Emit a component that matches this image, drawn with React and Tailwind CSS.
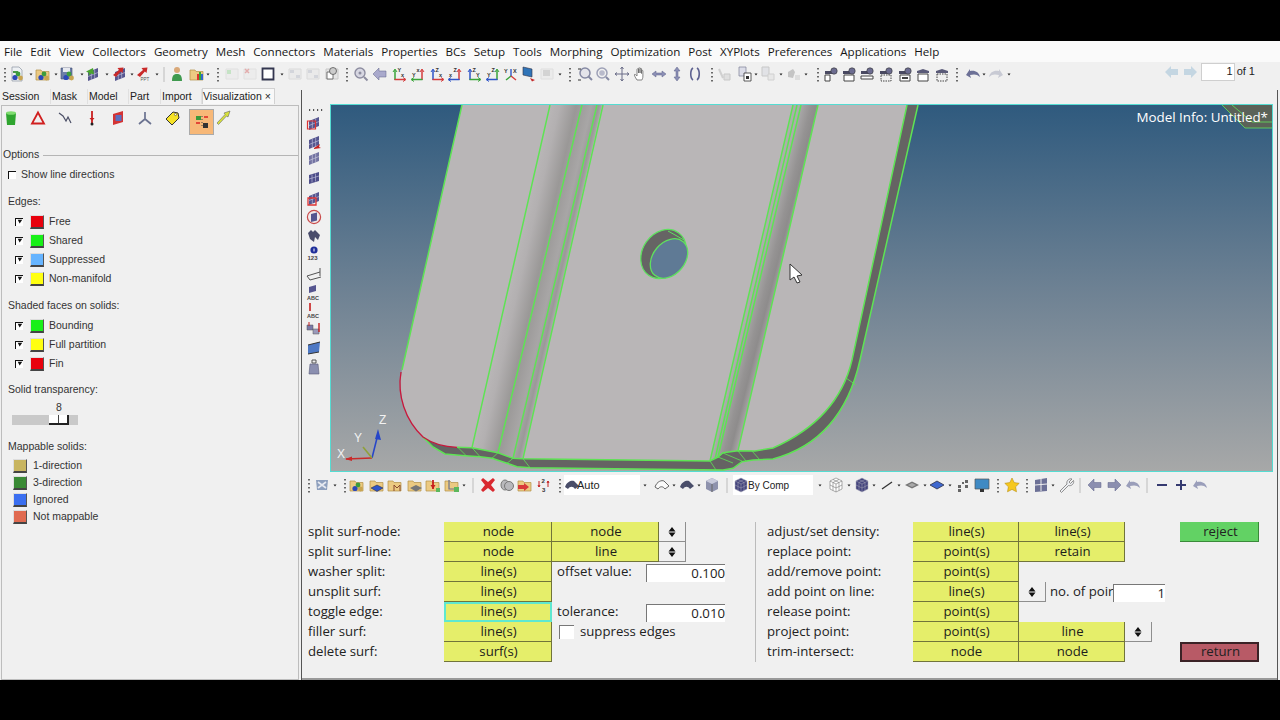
const MENU = ['File', 'Edit', 'View', 'Collectors', 'Geometry', 'Mesh', 'Connectors', 'Materials', 'Properties', 'BCs', 'Setup', 'Tools', 'Morphing', 'Optimization', 'Post', 'XYPlots', 'Preferences', 'Applications', 'Help'];

// small building blocks for the toolbar drawings
const grid = (
  <g>
    <path d="M3 6l10-4v9L3 15z" fill="#55558f" />
    <path d="M6.300 5v9M9.700 3.500v9M3 10.500l10-4" stroke="#c9c9e0" strokeWidth=".6" fill="none" />
  </g>
);
const folder = <path d="M1 4h5l1 1.5h7V14H1z" fill="#ecca82" stroke="#b28f45" strokeWidth=".7" />;
const blobs = (
  <g>
    <circle cx="6" cy="11.5" r="2.6" fill="#2c49b8" />
    <circle cx="11.5" cy="12" r="2.4" fill="#c9a550" />
    <circle cx="9" cy="8" r="2.4" fill="#3d9c3d" />
  </g>
);
const page = <path d="M3 1h7l3 3v11H3z" fill="#eef1f4" stroke="#8b93a0" strokeWidth=".7" />;
const tile = <path d="M2 3h12v10H2z" fill="#e5e5e5" stroke="#c8c8c8" />;
const lbl = (x, y, t, c = '#333') => <text x={x} y={y} fontSize="5.5" fontWeight="700" fill={c} fontFamily="Liberation Sans">{t}</text>;
const axes = (a, b, ta, tb) => (
  <g strokeWidth="1.5" fill="none">
    <path d="M4 14V4" stroke={a} />
    <path d="M2 6l2-3 2 3" stroke={a} strokeWidth="1" />
    <path d="M3.5 13.5H14" stroke={b} />
    <path d="M12 11.5l3 2-3 2" stroke={b} strokeWidth="1" />
    {lbl(6.5, 6, ta)}
    {lbl(10, 11, tb)}
  </g>
);
const axesFlip = (a, b, ta, tb) => (
  <g strokeWidth="1.5" fill="none">
    <path d="M12 14V4" stroke={a} />
    <path d="M10 6l2-3 2 3" stroke={a} strokeWidth="1" />
    <path d="M12.5 13.5H2" stroke={b} />
    <path d="M4 11.5l-3 2 3 2" stroke={b} strokeWidth="1" />
    {lbl(6.5, 6, ta)}
    {lbl(2, 11, tb)}
  </g>
);
const camera = (under) => (
  <g>
    <path d="M2 5h9v3H2z" fill="#4a4a62" />
    <circle cx="11" cy="5" r="3.2" fill="#6c6c90" stroke="#333" strokeWidth=".6" />
    {under}
  </g>
);
const fat = (d, c = '#8b8fb5') => <path d={d} fill={c} stroke="#5f6389" strokeWidth=".5" />;

const G = {
  dots: <path d="M8 2v1.4M8 6v1.4M8 10v1.4M8 14v1.4" stroke="#222" strokeWidth="1.3" />,
  hdots: <path d="M3 8h1.200M7 8h1.200M11 8h1.200M15 8h1.200" stroke="#222" strokeWidth="1.300" />,
  drop: <path d="M6.5 7.5h3L8 9.5z" fill="#222" />,
  sep: <path d="M8 1v15" stroke="#bcbcbc" />,
  imp: <g>{page}<path d="M4 6h5" stroke="#4a9a4a" strokeWidth="2" />{blobs}</g>,
  folderBlobs: <g>{folder}{blobs}</g>,
  save: <g><path d="M1 2h11v11H1z" fill="#6d7fa8" stroke="#3f4c70" strokeWidth=".6" /><path d="M3 2h7v4H3z" fill="#e7e9ef" />{blobs}</g>,
  arrowIn: <g>{grid}<path d="M8 2L1 5.5l3 1.5-.5 3L6 7.5l3 1z" fill="#4aa32f" /></g>,
  arrowOut: <g>{grid}<path d="M1 9l6-5-1.5-2 6-.5-1 5.5-1.6-1.5L4 11z" fill="#c92a2a" /></g>,
  ppt: <g><path d="M1 9l6-5-1.5-2 6-.5-1 5.5-1.6-1.5L4 11z" fill="#c92a2a" /><text x="4.5" y="15" fontSize="4.5" fill="#555" fontFamily="Liberation Sans">PPT</text></g>,
  person: <g><circle cx="8" cy="4" r="3" fill="#d9a878" /><path d="M3 15c0-6 2-7 5-7s5 1 5 7z" fill="#3f9a4f" /></g>,
  folderColor: <g>{folder}<path d="M8 8h2v6H8z" fill="#d33" /><path d="M10 6h2v8h-2z" fill="#3a3" /><path d="M12 8h2v6h-2z" fill="#36c" /></g>,
  fadeAdd: <g opacity=".35">{tile}<path d="M3 4h4v4H3z" fill="#7c7" /></g>,
  fadeDel: <g opacity=".35">{tile}<path d="M3 3l4 4m0-4L3 7" stroke="#c33" strokeWidth="1.5" /></g>,
  box: <path d="M2.5 2.5h11v11h-11z" fill="#fff" stroke="#33364f" strokeWidth="1.8" />,
  fadeTile: <g opacity=".5">{tile}<path d="M3 4h4v3H3zM9 9h4v3H9z" fill="#b8bcc8" /></g>,
  help: <g>{tile}<path d="M3 13V6h6v7z" fill="#fff" stroke="#555" strokeWidth=".8" /><circle cx="9" cy="5" r="3.5" fill="#ccc" stroke="#555" strokeWidth=".8" /></g>,
  mag: <g><circle cx="7" cy="7" r="5" fill="#d7d7e2" stroke="#8d8da0" strokeWidth="1.4" /><path d="M11 11l3.5 3.5" stroke="#8d8da0" strokeWidth="2" /><circle cx="7" cy="7" r="1.5" fill="#8d8da0" /></g>,
  back: fat('M1 8l6-6v3h7v6H7v3z', '#a9a9cc'),
  backPale: <path d="M1 8l6-6v3h7v6H7v3z" fill="#c4d6e2" />,
  nextPale: <path d="M15 8L9 2v3H2v6h7v3z" fill="#c4d6e2" />,
  back2: fat('M1 8l6-6v3.500h7v5H7V14z', '#8c8fb0'),
  next2: fat('M15 8L9 2v3.500H2v5h7V14z', '#8c8fb0'),
  yx: axes('#3aa53a', '#d43c3c', 'Y', 'x'),
  xy: axesFlip('#d43c3c', '#3aa53a', 'x', 'Y'),
  zx: axes('#2f55c8', '#d43c3c', 'Z', 'x'),
  xz: axesFlip('#d43c3c', '#2f55c8', 'Z', 'x'),
  zy: axes('#2f55c8', '#3aa53a', 'Z', 'Y'),
  yz: axesFlip('#3aa53a', '#2f55c8', 'Z', 'Y'),
  triadView: <g strokeWidth="1.4"><path d="M8 3v7" stroke="#2f55c8" /><path d="M8 10l-5 4" stroke="#3aa53a" /><path d="M8 10l5 4" stroke="#d43c3c" />{lbl(1, 7, 'Y')}{lbl(10, 7, 'X')}</g>,
  monitor: <g><path d="M2 1l9 2v8l-9-2z" fill="#2f74b8" stroke="#334" strokeWidth=".6" /><path d="M9 12l5 2-3 1.5z" fill="#c42a2a" /></g>,
  fadeMesh: <g opacity=".4">{tile}<path d="M4 4h7v6H4z" fill="#aaa" /></g>,
  fitZoom: <g><circle cx="8" cy="7" r="5" fill="#e4e4ea" stroke="#8589a3" strokeWidth="1.5" /><path d="M11.5 10.5L15 14" stroke="#8589a3" strokeWidth="2" /><path d="M1 14h3M1 3h3" stroke="#333" /></g>,
  circleZoom: <g><circle cx="7" cy="7" r="5" fill="none" stroke="#9da0b6" strokeWidth="1.5" /><circle cx="7" cy="7" r="2.8" fill="#b8bacb" /><path d="M11 11l3 3" stroke="#8589a3" strokeWidth="2" /></g>,
  pan: <path d="M8 1v14M1 8h14M6.5 3L8 1l1.5 2M6.5 13L8 15l1.5-2M3 6.5L1 8l2 1.5M13 6.5L15 8l-2 1.5" stroke="#6a6d88" fill="none" />,
  hand: <path d="M5 14C3 11 2 9 2.5 8.5S4 9 5 10V3.5c0-1 1.5-1 1.5 0V7V2.5c0-1 1.5-1 1.5 0V7V3c0-1 1.5-1 1.5 0v4.5V5c0-1 1.4-1 1.4 0v5c0 2-.5 3-1 4z" fill="#fff" stroke="#666" strokeWidth=".8" />,
  lr: fat('M1 8l4-3v2h6V5l4 3-4 3V9H5v2z'),
  ud: fat('M8 1l3 4H9v6h2l-3 4-3-4h2V5H5z'),
  braces: <g fill="none" stroke="#5d6190" strokeWidth="1.6"><path d="M6 2C3 4 3 12 6 14" /><path d="M10 2c3 2 3 10 0 12" /></g>,
  fadeA: <g opacity=".45"><path d="M3 3l4 9" stroke="#aaa" strokeWidth="2" /><path d="M8 8h6v6H8z" fill="#ccc" stroke="#999" /></g>,
  pages: <g><path d="M2 1h7v9H2z" fill="#dcdde8" stroke="#7b7e95" strokeWidth=".7" /><path d="M7 7h7v8H7z" fill="#fff" stroke="#333" strokeWidth=".8" /><path d="M9 10h3v3H9z" fill="#333" /></g>,
  fadeB: <g opacity=".45"><path d="M2 1h7v9H2z" fill="#cfd2da" stroke="#999" /><path d="M8 8h6v6H8z" fill="#ddd" stroke="#aaa" /></g>,
  fadeC: <g opacity=".5"><path d="M3 6l5-3 2 3-2 6-5-1z" fill="#999" /><path d="M10 9h5v5h-5z" fill="#ccc" /></g>,
  cam1: camera(<path d="M2 9h5v6H2z" fill="#fff" stroke="#444" />),
  cam2: camera(<path d="M3 9h10v6H3z" fill="#fff" stroke="#444" />),
  cam3: camera(<path d="M2 10h12v3H2z" fill="#fff" stroke="#444" />),
  cam4: camera(<path d="M3 9h10v6H3z" fill="none" stroke="#444" strokeDasharray="1.5 1" />),
  cam5: camera(<g><path d="M3 9h10v6H3z" fill="#fff" stroke="#444" /><path d="M5 11h6v2H5z" fill="#444" /></g>),
  vid1: <g><path d="M2 5l6-2 6 2v2H2z" fill="#5a5a78" /><path d="M3 8h10v7H3z" fill="#fff" stroke="#444" /></g>,
  vid2: <g><path d="M2 5l6-2 6 2v2H2z" fill="#5a5a78" /><path d="M3 8h10v7H3z" fill="none" stroke="#444" strokeDasharray="1.5 1" /></g>,
  undo: <path d="M1 9l4-6v2c5-1 9 1 10 6-3-3-6-3-10-2l1 3z" fill="#6c7096" />,
  redo: <path d="M15 9l-4-6v2C6 4 2 6 1 11c3-3 6-3 10-2l-1 3z" fill="#c8cad4" />,
  undoFade: <path d="M1 9l4-6v2c5-1 9 1 10 6-3-3-6-3-10-2l1 3z" fill="#9a9eba" />,
  // left panel row
  bucket: <g><path d="M3 3h10l-1 12H4z" fill="#2fa52f" /><ellipse cx="8" cy="3" rx="5" ry="1.8" fill="#7fdc6f" /></g>,
  tri: <path d="M8 2.5l6 11H2z" fill="none" stroke="#d01f1f" strokeWidth="1.8" />,
  lineNode: <path d="M2 3l4 3 3 5 2-4 3 6" fill="none" stroke="#4b4f66" strokeWidth="1.2" />,
  pin: <g><path d="M8 1v12" stroke="#c81e1e" strokeWidth="1.8" /><path d="M5.5 8L8 11l2.5-3z" fill="#c81e1e" /><circle cx="8" cy="14" r="1.5" fill="#222" /></g>,
  redMesh: <g><path d="M3 4l10-3v11L3 15z" fill="#d43434" /><path d="M5.5 5h6v6h-6z" fill="#5b6fc0" /></g>,
  triad: <path d="M8 2v7M8 9l-6 5M8 9l6 5" fill="none" stroke="#6a7290" strokeWidth="1.7" />,
  tag: <g><path d="M2 9l7-7 5 1 1 5-7 7z" fill="#f6e227" stroke="#333" strokeWidth="1" /><circle cx="11.5" cy="4.5" r="1.1" fill="#fff" stroke="#333" strokeWidth=".5" /></g>,
  split: <g><path d="M2 2h5v4H2z" fill="#3a9a3a" /><path d="M9 9h5v5H9z" fill="#333" /><path d="M2 9h4M10 3h4" stroke="#d22" strokeWidth="1.5" /><path d="M8 2v12" stroke="#444" strokeDasharray="1 2" /></g>,
  yellowArrow: <g><path d="M15 1L9 3l1 1.5L2 13l1.5 1.5L11.5 6l1.5 1z" fill="#d8e23a" stroke="#666" strokeWidth=".6" /></g>,
  // vertical bar
  v1: <g>{grid}<path d="M1.500 6h8v8h-8z" fill="none" stroke="#d33" strokeWidth="1.2" /></g>,
  v2: <g>{grid}<path d="M8 14l6-4-1 3 2 1-7 1z" fill="#c42020" /></g>,
  v3: <g opacity=".8">{grid}</g>,
  v4: <g><path d="M3 5l10-3v9L3 14z" fill="#4e4e8a" /><path d="M6 4.5v8M9.5 3.5v8M3 9l10-3" stroke="#c9c9e0" strokeWidth=".6" /></g>,
  v5: <g>{grid}<path d="M2 8h8v7H2z" fill="none" stroke="#d33" strokeWidth="1.3" /></g>,
  v6: <g><circle cx="8" cy="8" r="6.6" fill="#f0e8e8" stroke="#c94b4b" strokeWidth="1.2" /><path d="M5 5l6-1.5v8L5 13z" fill="#55558f" /></g>,
  binoc: <path d="M2 6l3-3 2 2 2-2 2 2 3 3-2 5-3-3-1 5-4-3z" fill="#4a4d6c" />,
  info: <g><circle cx="8" cy="5" r="3.6" fill="#1f2f9a" /><path d="M8 3.5v3" stroke="#fff" /><text x="1.5" y="15" fontSize="6" fontWeight="700" fill="#444" fontFamily="Liberation Sans">123</text></g>,
  measure: <g fill="none" stroke="#555"><path d="M1 9l13-4M1 9l3 4 11-3" /><path d="M14 1v8" /></g>,
  abc: <g><path d="M3 3l7-2v6l-7 2z" fill="#55558f" /><text x="1" y="15.500" fontSize="5.500" fontWeight="700" fill="#444" fontFamily="Liberation Sans">ABC</text></g>,
  abcPin: <g><path d="M4 1v8" stroke="#c81e1e" strokeWidth="1.6" /><text x="1" y="15.5" fontSize="5.5" fontWeight="700" fill="#444" fontFamily="Liberation Sans">ABC</text></g>,
  transl: <g><path d="M1 5h6v5H1z" fill="#7a7aa8" stroke="#555" strokeWidth=".5" /><path d="M7 9h6v5H7z" fill="#9a9aba" stroke="#555" strokeWidth=".5" /><path d="M13 3v9" stroke="#c42020" strokeWidth="1.4" /><path d="M3 2v4" stroke="#c42020" /></g>,
  plane: <g><path d="M2 5l12-3-1 10-11 2z" fill="#4d78c4" /><path d="M2 5l12-3M2 14l11-2" stroke="#333" /></g>,
  weight: <g><path d="M6 1h4v3H6z" fill="none" stroke="#555" /><path d="M4 5h8l1 10H3z" fill="#8b8fb0" stroke="#5a5d7a" strokeWidth=".6" /></g>,
  // bottom bar
  gearMesh: <g><path d="M2 3l12 0-1 10H3z" fill="#8d9fbd" /><path d="M4 5l8 6M12 5l-8 6" stroke="#e6e9f0" strokeWidth="1.6" /></g>,
  folderDiamond: <g>{folder}<path d="M2 11l6-3 6 3-6 3.5z" fill="#2f55c8" stroke="#223" strokeWidth=".5" /></g>,
  folderPlot: <g>{folder}<path d="M7 14V8l3 3 3-3v6" stroke="#8a4a30" fill="none" /></g>,
  folderGray: <g>{folder}<path d="M3 11l6-3 6 3-6 3.5z" fill="#777" /></g>,
  folderPin: <g>{folder}<path d="M8 3v9" stroke="#c81e1e" strokeWidth="1.8" /><path d="M5.5 8L8 12l2.5-4z" fill="#c81e1e" /><path d="M11 11h4v4h-4z" fill="#5cb85c" /></g>,
  folderAxis: <g>{folder}<path d="M5 3v9h7" stroke="#6a7290" fill="none" strokeWidth="1.2" /><path d="M10 10h5v5h-5z" fill="#5cb85c" /></g>,
  redX: <path d="M3 1l5 4 5-4 2 2-4 5 4 5-2 2-5-4-5 4-2-2 4-5-4-5z" fill="#d9282f" />,
  parts: <g fill="#b8b8bc" stroke="#777"><ellipse cx="6" cy="8" rx="4" ry="5" /><ellipse cx="10" cy="9" rx="4.5" ry="4.5" /></g>,
  folderRed: <g>{folder}<path d="M1 8h6v-2l5 4-5 4v-2H1z" fill="#d93a3a" /></g>,
  nums: <g><text x="5.5" y="6" fontSize="6" fontWeight="700" fill="#333" fontFamily="Liberation Sans">2</text><text x="6" y="15" fontSize="6" fontWeight="700" fill="#333" fontFamily="Liberation Sans">3</text><path d="M3 4v6M2 8l1 2 1-2M12 4v6M11 6l1-2 1 2" stroke="#c42020" fill="none" /></g>,
  surfLine: <path d="M1 10C3 4 8 3 10 4l5 5-4 3c-2-3-5-3-7 0z" fill="#fafafa" stroke="#666" />,
  surfDark: <path d="M1 10C3 4 8 3 10 4l5 5-4 3c-2-3-5-3-7 0z" fill="#4a4e6a" />,
  cube: <g><path d="M8 1l6 3v8l-6 3-6-3V4z" fill="#8e92ad" /><path d="M8 1l6 3-6 3-6-3z" fill="#c9cbdc" /><path d="M8 7v8" stroke="#666" /></g>,
  cubeWire: <g fill="#fff" stroke="#777" strokeWidth=".6"><path d="M8 1l6 3v8l-6 3-6-3V4z" /><path d="M2 4l6 3 6-3M8 7v8M5 2.5l6 3v8M11 2.5l-6 3v8M2 8l6 3 6-3" fill="none" /></g>,
  cubeMesh: <g stroke="#aab" strokeWidth=".5"><path d="M8 1l6 3v8l-6 3-6-3V4z" fill="#44447e" /><path d="M2 4l6 3 6-3M8 7v8M5 2.5l6 3v8M11 2.5l-6 3v8M2 8l6 3 6-3" fill="none" /></g>,
  lineDash: <path d="M3 12L13 5" stroke="#333" strokeWidth="1.3" />,
  flat: <g><path d="M1 8l7-3.5L15 8l-7 3.5z" fill="#777" /><path d="M4 8l4-2 4 2-4 2z" fill="#aaa" /></g>,
  flatBlue: <path d="M1 8l7-4 7 4-7 4z" fill="#3f68cf" stroke="#223" strokeWidth=".7" />,
  squares: <path d="M3 8h3v3H3zM10 3h3v3h-3zM3 12h3v3H3zM10 8h3v3h-3zM7 5h2v2H7z" fill="#666" />,
  screen: <g><path d="M1 2h14v10H1z" fill="#3f8ac4" stroke="#555" strokeWidth=".7" /><path d="M6 12h4v3H6z" fill="#333" /></g>,
  star: <path d="M8 1l2.2 4.6 5 .7-3.6 3.5.9 5L8 12.4l-4.5 2.4.9-5L.8 6.3l5-.7z" fill="#f6c81e" stroke="#b98f14" strokeWidth=".6" />,
  panes: <g><path d="M2 3l12-2v13L2 15z" fill="#6c7096" /><path d="M8 2v12M2 8l12-1" stroke="#eee" /></g>,
  wrench: <path d="M2 14l7-7c-1-3 2-6 5-5l-3 3 1.500 1.500 3-3c1 3-2 6-5 5l-7 7z" fill="#eceef2" stroke="#777" strokeWidth=".8" />,
  minus: <path d="M3 8h10" stroke="#353a70" strokeWidth="2" />,
  plus: <path d="M3 8h10M8 3v10" stroke="#353a70" strokeWidth="2" />,
};

const Ico = ({ n }) => (
  <svg viewBox="0 0 16 16" className="h-4 w-4 shrink-0 overflow-visible">{G[n]}</svg>
);

const Cells = ({ items }) => items.map(([n, w], i) => (
  <div key={i} className={w + ' shrink-0'}><Ico n={n} /></div>
));

const TOP = [
  ['dots', 'w-[12px]'], ['imp', 'w-[14px]'], ['drop', 'w-[12px]'], ['folderBlobs', 'w-[13px]'], ['drop', 'w-[12px]'], ['save', 'w-[14px]'], ['drop', 'w-[11px]'],
  ['arrowIn', 'w-[14px]'], ['drop', 'w-[13px]'], ['arrowOut', 'w-[12px]'], ['drop', 'w-[12px]'], ['ppt', 'w-[13px]'], ['drop', 'w-[7px]'], ['sep', 'w-[13px]'],
  ['person', 'w-[20px]'], ['folderColor', 'w-[11px]'], ['drop', 'w-[10px]'], ['dots', 'w-[14px]'], ['fadeAdd', 'w-[18px]'], ['fadeDel', 'w-[18px]'], ['box', 'w-[14px]'], ['drop', 'w-[13px]'],
  ['fadeTile', 'w-[18px]'], ['fadeTile', 'w-[19px]'], ['help', 'w-[15px]'], ['dots', 'w-[14px]'], ['mag', 'w-[19px]'], ['back', 'w-[19px]'],
  ['yx', 'w-[19px]'], ['xy', 'w-[19px]'], ['zx', 'w-[18px]'], ['xz', 'w-[19px]'], ['zy', 'w-[19px]'], ['yz', 'w-[18px]'], ['triadView', 'w-[18px]'], ['monitor', 'w-[18px]'],
  ['fadeMesh', 'w-[13px]'], ['drop', 'w-[10px]'], ['dots', 'w-[15px]'], ['fitZoom', 'w-[18px]'], ['circleZoom', 'w-[19px]'], ['pan', 'w-[18px]'], ['hand', 'w-[19px]'], ['lr', 'w-[18px]'], ['ud', 'w-[18px]'], ['braces', 'w-[17px]'],
  ['dots', 'w-[12px]'], ['fadeA', 'w-[21px]'], ['pages', 'w-[11px]'], ['drop', 'w-[12px]'], ['fadeB', 'w-[13px]'], ['drop', 'w-[12px]'], ['fadeC', 'w-[13px]'], ['drop', 'w-[12px]'], ['dots', 'w-[13px]'],
  ['cam1', 'w-[18px]'], ['cam2', 'w-[18px]'], ['cam3', 'w-[19px]'], ['cam4', 'w-[19px]'], ['cam5', 'w-[18px]'], ['vid1', 'w-[19px]'], ['vid2', 'w-[15px]'], ['dots', 'w-[16px]'],
  ['undo', 'w-[11px]'], ['drop', 'w-[12px]'], ['redo', 'w-[13px]'], ['drop', 'w-[12px]'],
];

const VERT = [
  ['hdots', 'h-[13px]'], ['v1', 'h-[19px]'], ['v2', 'h-[16px]'], ['v3', 'h-[20px]'], ['v4', 'h-[20px]'], ['v5', 'h-[19px]'], ['v6', 'h-[18px]'], ['binoc', 'h-[18px]'],
  ['info', 'h-[22px]'], ['measure', 'h-[17px]'], ['abc', 'h-[18px]'], ['abcPin', 'h-[18px]'], ['transl', 'h-[20px]'], ['plane', 'h-[19px]'], ['weight', 'h-[16px]'],
];

const BOT1 = [
  ['dots', 'w-[13px]'], ['gearMesh', 'w-[13px]'], ['drop', 'w-[10px]'], ['dots', 'w-[12px]'], ['folderBlobs', 'w-[20px]'], ['folderDiamond', 'w-[18px]'], ['folderPlot', 'w-[20px]'], ['folderGray', 'w-[18px]'],
  ['folderPin', 'w-[19px]'], ['folderAxis', 'w-[12px]'], ['drop', 'w-[9px]'], ['sep', 'w-[15px]'], ['redX', 'w-[19px]'], ['parts', 'w-[18px]'], ['folderRed', 'w-[19px]'], ['nums', 'w-[16px]'], ['dots', 'w-[12px]'],
];
const BOT2 = [
  ['drop', 'w-[17px]'], ['surfLine', 'w-[12px]'], ['drop', 'w-[13px]'], ['surfDark', 'w-[12px]'], ['drop', 'w-[13px]'], ['cube', 'w-[15px]'], ['sep', 'w-[14px]'],
];
const BOT3 = [
  ['drop', 'w-[16px]'], ['cubeWire', 'w-[13px]'], ['drop', 'w-[13px]'], ['cubeMesh', 'w-[12px]'], ['drop', 'w-[13px]'], ['lineDash', 'w-[12px]'], ['drop', 'w-[13px]'], ['flat', 'w-[13px]'], ['drop', 'w-[12px]'], ['flatBlue', 'w-[13px]'], ['drop', 'w-[13px]'],
  ['squares', 'w-[19px]'], ['screen', 'w-[16px]'], ['dots', 'w-[14px]'], ['star', 'w-[15px]'], ['dots', 'w-[14px]'], ['panes', 'w-[12px]'], ['drop', 'w-[13px]'], ['wrench', 'w-[14px]'], ['sep', 'w-[15px]'],
  ['back2', 'w-[19px]'], ['next2', 'w-[19px]'], ['undoFade', 'w-[14px]'], ['sep', 'w-[15px]'], ['minus', 'w-[19px]'], ['plus', 'w-[19px]'], ['undoFade', 'w-[16px]'],
];

const TABS = [
  ['Session', 'w-[50px]'], ['Mask', 'w-[37px]'], ['Model', 'w-[41px]'], ['Part', 'w-[32px]'], ['Import', 'w-[41px]'],
];

const Check = ({ on }) => (
  <span className="flex h-[8px] w-[8px] shrink-0 items-center justify-center border-l border-t border-[#111] bg-white">
    {on && <svg viewBox="0 0 8 8" className="h-[6px] w-[6px]"><path d="M1 1l2.500 5L7 1z" fill="#111" /></svg>}
  </span>
);

const Swatch = ({ c }) => <span className={c + ' h-[14px] w-[14px] shrink-0 border-b-2 border-r border-b-[#444] border-r-[#555] border-t border-l border-t-[#ddd] border-l-[#ddd]'} />;

const EdgeRow = ({ c, t }) => (
  <div className="flex h-[19px] items-center pl-[13px]">
    <Check on />
    <span className="ml-[7px] flex"><Swatch c={c} /></span>
    <span className="ml-[5px]">{t}</span>
  </div>
);

const MapRow = ({ c, t }) => (
  <div className="flex h-[17px] items-center pl-[11px]">
    <Swatch c={c} />
    <span className="ml-[6px]">{t}</span>
  </div>
);

const Btn = ({ w = 'w-[108px]', children, hot }) => (
  <div className={w + ' flex h-[20px] shrink-0 items-center justify-center bg-[#e5ee6a] pl-[2px] text-[#1c1c1c] border-b border-r border-b-[#71743a] border-r-[#71743a] ' + (hot ? 'outline-2 -outline-offset-2 outline-[#5fe8d0]' : '')}>{children}</div>
);

const Spin = ({ w = 'w-[27px]' }) => (
  <div className={w + ' flex h-[20px] shrink-0 items-center justify-center border-b border-r border-[#8e8e8e]'}>
    <svg viewBox="0 0 8 10" className="h-[10px] w-[8px]"><path d="M4 0l3.500 4.500h-7zM4 10l3.500-4.500h-7z" fill="#111" /></svg>
  </div>
);

const Input = ({ w, v }) => (
  <div className={w + ' mt-[2px] flex h-[18px] shrink-0 items-center justify-end bg-white border-l border-t border-[#777]'}>{v}</div>
);

const Row = ({ label, w = 'w-[136px]', children }) => (
  <div className="flex h-[20px] items-center">
    <span className={w + ' shrink-0'}>{label}</span>
    {children}
  </div>
);

const Plate = () => (
  <svg viewBox="331 105 941 366" className="h-full w-full">
    <defs>
      <linearGradient id="g1" gradientUnits="userSpaceOnUse" x1="472" y1="448" x2="525" y2="460">
        <stop offset="0" stopColor="#b9b6b7" />
        <stop offset=".18" stopColor="#b3b0b1" />
        <stop offset=".48" stopColor="#9a9897" />
        <stop offset=".75" stopColor="#a8a6a6" />
        <stop offset=".88" stopColor="#9b9999" />
        <stop offset="1" stopColor="#b9b6b7" />
      </linearGradient>
      <linearGradient id="g2" gradientUnits="userSpaceOnUse" x1="710" y1="461" x2="738" y2="468">
        <stop offset="0" stopColor="#aeacad" />
        <stop offset=".4" stopColor="#959393" />
        <stop offset=".6" stopColor="#8e8c8c" />
        <stop offset="1" stopColor="#b9b6b7" />
      </linearGradient>
    </defs>
    {/* side wall */}
    <path
      d="M423 437L433 447L445 454L465 455.700L480 456.700L492 458.300L507 463.300L517 466.700L530 467.700L723 470L733 468.300L742 461.700L753 460L773 459C825 445 850 405 860 360L918 105L907 105L852 360z"
      fill="#656363"
    />
    {/* top face */}
    <path
      d="M462 105L402 370C397 395 405 420 423 437C433 444 445 447 457 447.300L472 447.700L498 452.700L513 458.300L523 458.700L710 461L718 457L723 452.700L738 450.700L755 451L773 448C825 425 845 390 852 360L907 105z"
      fill="#b9b6b7"
    />
    <path d="M550 105L602 105L523 458.700L513 458.300L498 452.700L472 447.700z" fill="url(#g1)" />
    <path d="M793 105L818 105L738 450.700L723 452.700L718 457L710 461z" fill="url(#g2)" />
    {/* hole */}
    <ellipse cx="663.500" cy="254" rx="26" ry="21" transform="rotate(-55 663.500 254)" fill="#666464" stroke="#5fe05f" strokeWidth="1.300" />
    <ellipse cx="669" cy="258.500" rx="22" ry="16" transform="rotate(-50 669 258.500)" fill="#5f7a95" stroke="#5fe05f" strokeWidth="1.300" />
    <path d="M668 231L684 240" stroke="#5fe05f" strokeWidth="1" />
    {/* feature edges */}
    <g fill="none" stroke="#5ee354" strokeWidth="1.500">
      <path d="M462 105L402 370" />
      <path d="M907 105L852 360C845 390 825 425 773 448L755 451L738 450.700L723 452.700L718 457L710 461L523 458.700L513 458.300L498 452.700L472 447.700L457 447.300" />
      <path d="M918 105L860 360C850 405 825 445 773 459L753 460L742 461.700L733 468.300L723 470L530 467.700L517 466.700L507 463.300L492 458.300L480 456.700L465 455.700L445 454L433 447L423 437" />
      <path d="M550 105L472 447.700M582 105L498 452.700M597 105L513 458.300M603 105L523 458.700" />
      <path d="M793 105L710 461M797 105L715 459M801 105L718 457M818 105L738 450.700" />
      <path d="M458 447.500L466 455.500M472 447.700L480 456.700M498 452.700L492 458.300M513 458.300L507 463.300M523 458.700L530 467.700" strokeWidth=".8" />
      <path d="M710 461L716 470M718 457L733 463M723 453L742 461M738 451L746 461M752 451L760 460M846 378L856 385" strokeWidth=".8" />
    </g>
    <path d="M401 372C397 395 405 420 423 437C433 444 445 447 457 447.300" fill="none" stroke="#c8183c" strokeWidth="1.300" />
    {/* corner piece behind the label */}
    <path d="M1222 105L1272 105L1272 128L1245 128z" fill="#5b6258" />
    <path d="M1222 105L1245 128L1272 128M1232 105L1252 122L1272 122" fill="none" stroke="#62e35a" strokeWidth=".8" />
    {/* triad */}
    <g fill="none" strokeWidth="1.600">
      <path d="M372 458L378 434" stroke="#2746c8" />
      <path d="M372 458L346 459" stroke="#c92a2a" />
      <path d="M372 458L363 447" stroke="#8fa03a" />
    </g>
    <path d="M378 429L381 440L375 439z" fill="#2746c8" />
    <path d="M345 459L352 456.500L352 461z" fill="#c92a2a" />
    <g fontSize="12" fill="#f2f2f2" fontFamily="Liberation Sans">
      <text x="379" y="424">Z</text>
      <text x="354" y="442">Y</text>
      <text x="337" y="458">X</text>
    </g>
    {/* mouse pointer */}
    <path d="M790 264L790 280L794 277L797 283L800 282L797 276L802 275z" fill="#fff" stroke="#333" strokeWidth="1" />
  </svg>
);

export default function App() {
  return (
    <div className="flex h-[720px] w-[1280px] flex-col overflow-hidden bg-black pt-[41px] font-['Liberation_Sans',sans-serif]">
      <div className="flex h-[639px] flex-col bg-[#f0f0f0]">
        {/* menu bar */}
        <div className="flex h-[21px] items-center gap-[8px] bg-[#fafafa] pl-[4px] font-['Open_Sans',sans-serif] text-[11.6px] text-[#161616]">
          {MENU.map(m => <span key={m}>{m}</span>)}
        </div>

        {/* main toolbar */}
        <div className="flex h-[26px] items-center pb-[2px] text-[11px] text-[#222]">
          <div className="-ml-[3px] flex items-center"><Cells items={TOP} /></div>
          <div className="mb-[5px] ml-auto flex items-center pr-[25px]">
            <div className="w-[18px]"><Ico n="backPale" /></div>
            <div className="w-[19px]"><Ico n="nextPale" /></div>
            <div className="flex h-[18px] w-[34px] items-center justify-end border border-[#cfcfcf] bg-white pr-[1px]">1</div>
            <span className="ml-[2px]">of 1</span>
          </div>
        </div>

        <div className="flex min-h-0 flex-1">
          {/* left panel */}
          <div className="flex w-[301px] shrink-0 flex-col pl-[1px] pr-[2px] text-[10.5px] text-[#333]">
            <div className="flex h-[17px] items-end pb-px text-[#222]">
              {TABS.map(([t, w]) => (
                <div key={t} className={w + ' flex h-[15px] items-center border-r border-[#e0e0e0] pl-[1px]'}>{t}</div>
              ))}
              <div className="flex h-[16px] w-[73px] items-center whitespace-nowrap border border-b-0 border-[#d2d2d2] bg-[#f8f8f8]">Visualization ×</div>
            </div>
            <div className="flex-1 border border-[#bdbdbd]">
              <div className="mt-[3px] flex h-[26px] items-start pl-[1px]">
                <div className="w-[27px] pt-px"><Ico n="bucket" /></div>
                <div className="w-[27px] pt-px"><Ico n="tri" /></div>
                <div className="w-[27px] pt-px"><Ico n="lineNode" /></div>
                <div className="w-[26px] pt-px"><Ico n="pin" /></div>
                <div className="w-[27px] pt-px"><Ico n="redMesh" /></div>
                <div className="w-[27px] pt-px"><Ico n="triad" /></div>
                <div className="w-[25px] pt-px"><Ico n="tag" /></div>
                <div className="flex h-[26px] w-[25px] items-center justify-center border border-[#aaa] bg-[#f7b878]"><Ico n="split" /></div>
                <div className="ml-px pt-px"><Ico n="yellowArrow" /></div>
              </div>
              <div className="mt-[13px] flex h-[14px] items-center pl-[1px]">
                <span>Options</span>
                <div className="ml-[4px] h-px flex-1 bg-[#b5b5b5]" />
              </div>
              <div className="mt-[6px] flex h-[14px] items-center pl-[6px]">
                <Check />
                <span className="ml-[5px]">Show line directions</span>
              </div>
              <div className="mt-[12px] h-[14px] pl-[6px] leading-[14px]">Edges:</div>
              <div className="mt-[4px]">
                <EdgeRow c="bg-[#e8000c]" t="Free" />
                <EdgeRow c="bg-[#18f018]" t="Shared" />
                <EdgeRow c="bg-[#66b4ff]" t="Suppressed" />
                <EdgeRow c="bg-[#ffff10]" t="Non-manifold" />
              </div>
              <div className="mt-[10px] h-[14px] pl-[6px] leading-[14px]">Shaded faces on solids:</div>
              <div className="mt-[4px]">
                <EdgeRow c="bg-[#18f018]" t="Bounding" />
                <EdgeRow c="bg-[#ffff10]" t="Full partition" />
                <EdgeRow c="bg-[#e8000c]" t="Fin" />
              </div>
              <div className="mt-[9px] h-[14px] pl-[6px] leading-[14px]">Solid transparency:</div>
              <div className="mt-[4px] h-[14px] w-[114px] text-center leading-[14px]">8</div>
              <div className="relative ml-[10px] mt-px flex h-[10px] w-[66px] justify-start bg-[#c9c9c9]">
                <div className="ml-[37px] flex h-[10px] w-[20px] justify-center border-b-2 border-r-2 border-[#222] bg-white">
                  <div className="h-full w-px bg-[#444]" />
                </div>
              </div>
              <div className="mt-[14px] h-[14px] pl-[6px] leading-[14px]">Mappable solids:</div>
              <div className="mt-[4px]">
                <MapRow c="bg-[#c8b560]" t="1-direction" />
                <MapRow c="bg-[#3a8a35]" t="3-direction" />
                <MapRow c="bg-[#3b6ff0]" t="Ignored" />
                <MapRow c="bg-[#e06a50]" t="Not mappable" />
              </div>
            </div>
          </div>

          {/* right column */}
          <div className="mt-[2px] flex w-[977px] shrink-0 flex-col border-l border-r border-[#555]">
            <div className="h-[14px] shrink-0" />
            <div className="flex h-[368px] shrink-0">
              <div className="w-[28px] shrink-0 pl-[4px]">
                <div className="mt-[-2px]">
                  {VERT.map(([n, h], i) => <div key={i} className={h}><Ico n={n} /></div>)}
                </div>
              </div>
              <div className="relative w-[943px] shrink-0 border border-[#55dcd2] bg-[linear-gradient(180deg,#2f5a7e_0%,#6d8193_50%,#a7a8a8_100%)]">
                <Plate />
                <div className="absolute right-[4px] top-[2px] font-['Open_Sans',sans-serif] text-[13.4px] text-white">Model Info: Untitled*</div>
              </div>
            </div>

            {/* lower toolbar */}
            <div className="flex h-[26px] shrink-0 items-center text-[11px] text-[#222]">
              <div className="-ml-[1px] flex items-center"><Cells items={BOT1} /></div>
              <div className="flex h-[20px] w-[76px] shrink-0 items-center bg-white"><Ico n="surfDark" /><span className="-ml-[3px]">Auto</span></div>
              <div className="-ml-[3px] flex items-center"><Cells items={BOT2} /></div>
              <div className="flex h-[20px] w-[80px] shrink-0 items-center bg-white text-[10px]"><Ico n="cubeMesh" /><span className="-ml-px">By Comp</span></div>
              <div className="-ml-[1px] flex items-center"><Cells items={BOT3} /></div>
            </div>

            {/* edit panel */}
            <div className="flex min-h-0 flex-1 border-b-2 border-[#999] pt-[24px] font-['Open_Sans',sans-serif] text-[13.2px] text-[#222]">
              <div className="w-[453px] shrink-0 pl-[6px]">
                <Row label="split surf-node:"><Btn>node</Btn><Btn w="w-[107px]">node</Btn><Spin /></Row>
                <Row label="split surf-line:"><Btn>node</Btn><Btn w="w-[107px]">line</Btn><Spin /></Row>
                <Row label="washer split:"><Btn>line(s)</Btn><span className="ml-[5px] w-[89px] shrink-0">offset value:</span><Input w="w-[79px]" v="0.100" /></Row>
                <Row label="unsplit surf:"><Btn>line(s)</Btn></Row>
                <Row label="toggle edge:"><Btn hot>line(s)</Btn><span className="ml-[5px] w-[89px] shrink-0">tolerance:</span><Input w="w-[79px]" v="0.010" /></Row>
                <Row label="filler surf:"><Btn>line(s)</Btn><span className="ml-[7px] h-[14px] w-[15px] border-l border-t border-[#777] bg-white" /><span className="ml-[6px]">suppress edges</span></Row>
                <Row label="delete surf:"><Btn>surf(s)</Btn></Row>
              </div>
              <div className="h-[140px] w-px shrink-0 bg-[#bbb]" />
              <div className="w-[424px] shrink-0 pl-[11px]">
                <Row w="w-[146px]" label="adjust/set density:"><Btn w="w-[106px]">line(s)</Btn><Btn w="w-[106px]">line(s)</Btn></Row>
                <Row w="w-[146px]" label="replace point:"><Btn w="w-[106px]">point(s)</Btn><Btn w="w-[106px]">retain</Btn></Row>
                <Row w="w-[146px]" label="add/remove point:"><Btn w="w-[106px]">point(s)</Btn></Row>
                <Row w="w-[146px]" label="add point on line:">
                  <Btn w="w-[106px]">line(s)</Btn>
                  <Spin />
                  <span className="ml-[4px] w-[63px] shrink-0 whitespace-nowrap">no. of poir</span>
                  <Input w="w-[52px]" v="1" />
                </Row>
                <Row w="w-[146px]" label="release point:"><Btn w="w-[106px]">point(s)</Btn></Row>
                <Row w="w-[146px]" label="project point:"><Btn w="w-[106px]">point(s)</Btn><Btn w="w-[106px]">line</Btn><Spin /></Row>
                <Row w="w-[146px]" label="trim-intersect:"><Btn w="w-[106px]">node</Btn><Btn w="w-[106px]">node</Btn></Row>
              </div>
              <div className="flex h-[140px] w-[79px] shrink-0 flex-col justify-between">
                <div className="flex h-[20px] items-center justify-center border-b border-r border-[#3a8a3a] bg-[#62d264] pl-[3px]">reject</div>
                <div className="flex h-[20px] items-center justify-center border-2 border-[#3b2226] bg-[#b85a66] pl-[2px]">return</div>
              </div>
            </div>
          </div>
        </div>
      </div>
    </div>
  );
}
